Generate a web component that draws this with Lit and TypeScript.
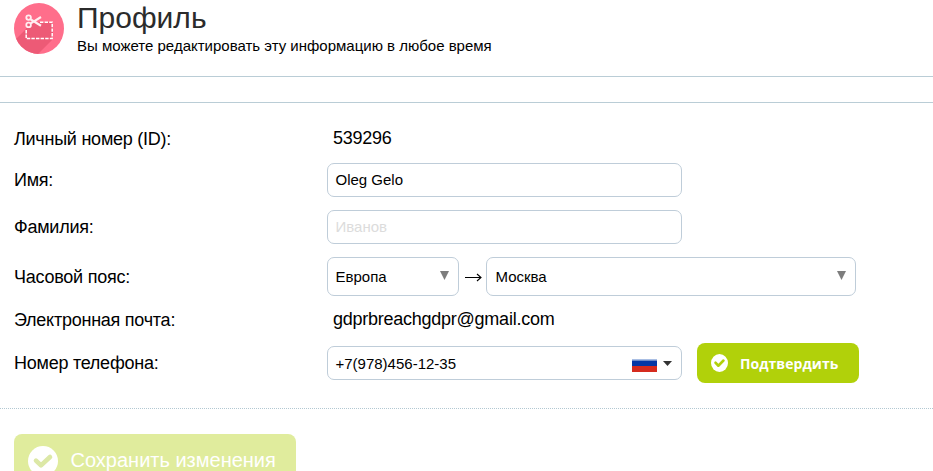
import { LitElement, html, css, svg } from "lit";
import { customElement } from "lit/decorators.js";

const check = (color: string) => html`
  <svg class="check" viewBox="0 0 30 30" preserveAspectRatio="none">
    <circle cx="15" cy="15" r="15" fill="#fff" />
    ${svg`<path d="M8 14.6l5 4.800 9-8.400" fill="none" stroke=${color} stroke-width="4.600" stroke-linecap="round" stroke-linejoin="round" />`}
  </svg>`;

@customElement("app-root")
export class AppRoot extends LitElement {
  static styles = css`
    :host {
      display: block;
      height: 471px;
      overflow: hidden;
      background: #fff;
      color: #000;
      font-family: "Liberation Sans", Arial, sans-serif;
      font-size: 18px;
    }
    * { box-sizing: border-box; }
    header {
      display: flex;
      gap: 13px;
      height: 77px;
      padding: 3px 14px 0;
      border-bottom: 1px solid #bacdd6;
    }
    .logo { width: 50px; height: 51px; flex: none; }
    h1 {
      margin: -2px 0 0;
      font-size: 30px;
      font-weight: 400;
      line-height: 34px;
      color: #2b2b2b;
      white-space: nowrap;
    }
    .sub { font-size: 15px; line-height: 18px; margin-top: 2px; white-space: nowrap; }
    .strip { height: 26px; border-bottom: 1px solid #bacdd6; }
    form { padding: 16px 14px 0; height: 305px; letter-spacing: -0.25px; }
    .row {
      display: grid;
      grid-template-columns: 313px 1fr;
      align-items: center;
      white-space: nowrap;
    }
    .id { height: 40px; }
    .id .label { padding-top: 1px; }
    .id .plain { padding-bottom: 1px; }
    .name { height: 34px; margin-top: 4px; }
    .surname { height: 34px; margin-top: 13px; }
    .zone { height: 39px; margin-top: 13px; }
    .zone .label { padding-top: 1px; }
    .mail { height: 36px; margin-top: 6px; }
    .mail .plain { padding-bottom: 2px; }
    .phone { height: 40px; margin-top: 5px; }
    .plain { padding-left: 6px; }
    .cells { display: flex; align-items: center; }
    .box {
      width: 355px;
      height: 34px;
      border: 1px solid #bfcdd9;
      border-radius: 7px;
      padding: 0 9px 0 7.5px;
      font-size: 15px;
      letter-spacing: 0;
      display: flex;
      align-items: center;
      justify-content: space-between;
    }
    .text { padding-bottom: 2px; }
    .hint { color: #dcdcdc; }
    .select { height: 39px; }
    .region { width: 132px; }
    .city { width: 370px; padding-left: 8.5px; }
    .tri { width: 9px; height: 9px; margin-bottom: 3px; }
    .arrow { width: 27px; height: 10px; }
    .country { display: flex; align-items: center; gap: 6px; }
    .flag { width: 25px; height: 13px; margin-top: 4px; }
    .caret { width: 9px; height: 5px; margin-top: 1px; }
    .confirm {
      margin-left: 15px;
      width: 162px;
      height: 40px;
      border-radius: 8px;
      background: #b1d10a;
      color: #fff;
      font: 700 14px "Open Sans", sans-serif;
      letter-spacing: 0.05px;
      display: flex;
      align-items: center;
      padding: 0 0 0 14px;
      gap: 12px;
    }
    .confirm .check { width: 17px; height: 18px; }
    .confirm span { padding-top: 1px; }
    .footer { border-top: 1px dotted #b2c8d2; padding: 25px 14px 0; }
    .save {
      width: 282px;
      height: 54px;
      border-radius: 8px;
      background: #e0ec9d;
      color: #fff;
      font-size: 20px;
      display: flex;
      align-items: center;
      padding-left: 14px;
      gap: 12.5px;
      white-space: nowrap;
    }
    .save .check { width: 30px; height: 30px; }
    .save span { padding-bottom: 1px; }
  `;

  private tri() {
    return html`<svg class="tri" viewBox="0 0 9 9"><path d="M0 0h9L4.5 9z" fill="#7d7d7d" /></svg>`;
  }

  render() {
    return html`
      <header>
        <svg class="logo" viewBox="0 0 50 51">
          <defs><clipPath id="disc"><ellipse cx="25" cy="25.5" rx="25" ry="25.5" /></clipPath></defs>
          <g clip-path="url(#disc)">
            <rect width="50" height="51" fill="#ff6e8b" />
            <path d="M12 26L0 38v13h24l15-15V19H12z" fill="#ed5a76" />
          </g>
          <path d="M26 19.2h12.2v16.400h-26V26" fill="none" stroke="#fff" stroke-width="1.500" stroke-dasharray="3.400 1.200" />
          <g fill="none" stroke="#ffeef1" stroke-width="1.800">
            <circle cx="14.600" cy="14.600" r="2.300" />
            <circle cx="14.600" cy="21.900" r="2.300" />
            <path d="M27 14L20 18.400L27 22.800M20 18.400L16.800 16.500M20 18.400L16.800 20.300" stroke-width="2.200" />
          </g>
        </svg>
        <div>
          <h1>Профиль</h1>
          <div class="sub">Вы можете редактировать эту информацию в любое время</div>
        </div>
      </header>
      <div class="strip"></div>
      <form>
        <div class="row id"><span class="label">Личный номер (ID):</span><span class="plain">539296</span></div>
        <div class="row name"><span>Имя:</span><div class="box"><span class="text">Oleg Gelo</span></div></div>
        <div class="row surname"><span>Фамилия:</span><div class="box hint"><span class="text">Иванов</span></div></div>
        <div class="row zone">
          <span class="label">Часовой пояс:</span>
          <div class="cells">
            <div class="box select region">Европа${this.tri()}</div>
            <svg class="arrow" viewBox="0 0 27 10"><path d="M6 5.500H22M18 2l4 3.500-4 3.500" fill="none" stroke="#000" stroke-width="1.100" /></svg>
            <div class="box select city">Москва${this.tri()}</div>
          </div>
        </div>
        <div class="row mail"><span>Электронная почта:</span><span class="plain">gdprbreachgdpr@gmail.com</span></div>
        <div class="row phone">
          <span>Номер телефона:</span>
          <div class="cells">
            <div class="box">+7(978)456-12-35
              <span class="country">
                <svg class="flag" viewBox="0 0 25 13"><path d="M0 0h25v1.500H0z" fill="#aabfe4" /><path d="M0 1.500h25v5.500H0z" fill="#0437a5" /><path d="M0 7h25v6H0z" fill="#d52b1e" /></svg>
                <svg class="caret" viewBox="0 0 9 5"><path d="M0 0h9L4.500 5z" fill="#333" /></svg>
              </span>
            </div>
            <div class="confirm">${check("#b1d10a")}<span>Подтвердить</span></div>
          </div>
        </div>
      </form>
      <div class="footer"><div class="save">${check("#dce8a6")}<span>Сохранить изменения</span></div></div>
    `;
  }
}
